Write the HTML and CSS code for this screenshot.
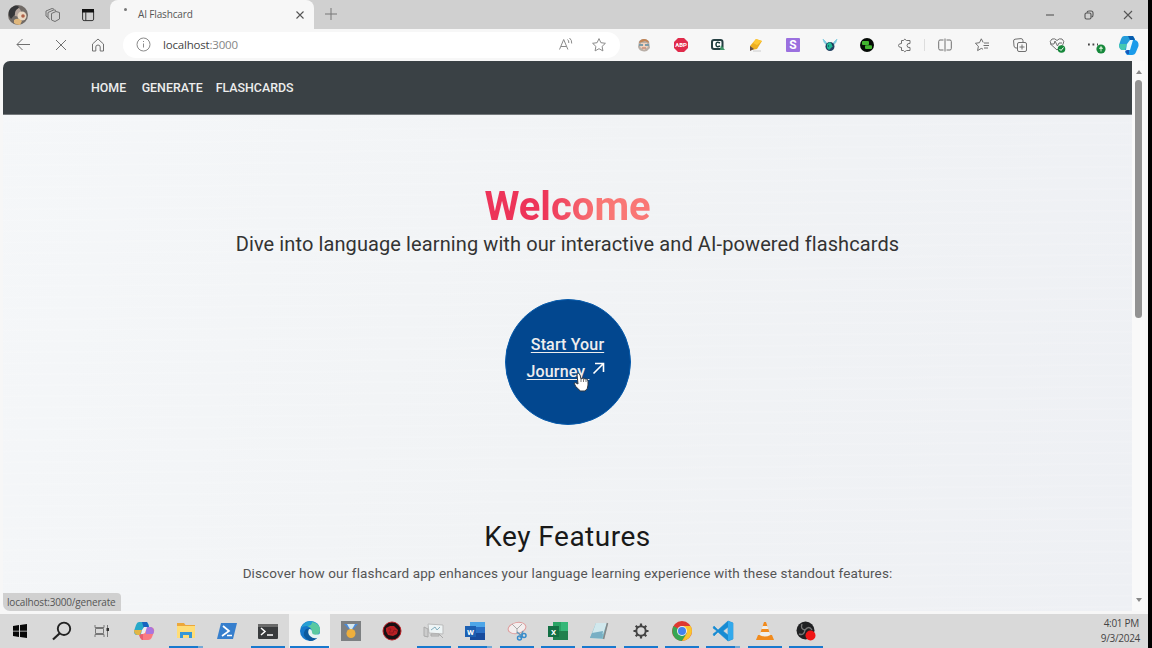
FILE: index.html
```html
<!DOCTYPE html>
<html lang="en">
<head>
<meta charset="utf-8">
<title>AI Flashcard</title>
<link rel="stylesheet" href="styles.css">
</head>
<body>
<div class="screen">
  <div class="titlebar">
    <div class="title-tools">
      <svg class="i22" viewBox="0 0 22 22"><circle cx="11" cy="11" r="10" fill="#706a66"/><path d="M3 5Q9-1 12 3Q9 10 4 15Q0 10 3 5" fill="#353638"/><path d="M8 12Q7 6 12 4Q16 8 13 13Z" fill="#b5a69e"/><circle cx="15" cy="12" r="4.500" fill="#e9d8c3"/><circle cx="16" cy="12" r="1.800" fill="#ae6048"/><path d="M7 16Q11 13 15 17L13 21Q9 21 7 19Z" fill="#e0b77c"/></svg>
      <svg class="i16 line" viewBox="0 0 16 16"><path d="M6.500 6.500 11 4.500l3.500 1v6.500l-4.500 2.500-3.500-1.500zM5 12.500l-2-1.500V5.500L9 2.800l2 .7M3 10.500 1 9V4L7 1.500l2 .7"/></svg>
      <svg class="i14" viewBox="0 0 14 14"><rect x="1.600" y="1.600" width="11" height="11" rx="1.500" fill="none" stroke="#333"/><path d="M1 1h12v3.500H1z" fill="#111"/><path d="M4.800 4v8.500" stroke="#333"/></svg>
    </div>
    <div class="tab">
      <i class="loading-dot"></i>
      <span class="tab-name">AI Flashcard</span>
      <svg class="i10 dark" viewBox="0 0 10 10"><path d="m1.500 1.500 7 7M8.500 1.500l-7 7"/></svg>
    </div>
    <svg class="new-tab" viewBox="0 0 14 14"><path d="M7 1v12M1 7h12"/></svg>
    <div class="window-controls">
      <svg class="i10 dark" viewBox="0 0 10 10"><path d="M1 5h8"/></svg>
      <svg class="i10 dark" viewBox="0 0 10 10"><rect x="1" y="3" width="6" height="6" rx="1.500"/><path d="M3 2.800Q3 1 5 1h2q2 0 2 2v2q0 2-1.500 2"/></svg>
      <svg class="i10 dark" viewBox="0 0 10 10"><path d="m1 1 8 8M9 1 1 9"/></svg>
    </div>
  </div>

  <div class="toolbar">
    <div class="nav-tools">
      <svg class="i16 line" viewBox="0 0 16 16"><path d="M14 7.500H1M6.500 2 1 7.500 6.500 13"/></svg>
      <svg class="i12 line" viewBox="0 0 12 12"><path d="m1 1 10 10M11 1 1 11"/></svg>
      <svg class="i16 line home" viewBox="0 0 16 16"><path d="M2.500 7 8 2l5.500 5v7h-3.300V10q0-2-2.200-2t-2.200 2v4H2.500z"/></svg>
    </div>
    <div class="address">
      <svg class="i16 line pale" viewBox="0 0 16 16"><circle cx="7.500" cy="7.500" r="6.500"/><path d="M7.500 6.500v4M7.500 4v1"/></svg>
      <span class="url">localhost<span class="port">:3000</span></span>
      <svg class="i16 line pale read" viewBox="0 0 16 16"><path d="m1.500 12.500 4.200-10 4.200 10M3 9.500h5.500M9.500 2.500q1.500 1 1.300 3.500M11.500 1q2.500 2 2.200 5.500"/></svg>
      <svg class="i16 line pale star" viewBox="0 0 16 16"><path d="m8 1.600 1.900 4.100 4.500.6-3.300 3.100.8 4.500L8 11.700l-3.900 2.200.8-4.500L1.600 6.300l4.500-.6z"/></svg>
    </div>
    <div class="extensions">
      <span><svg class="i14" viewBox="0 0 14 14"><path d="M2 3Q7-1 12 3l1 7q-3 4-6 3.500Q2 13 1 9z" fill="#b9afa7"/><path d="M2 5Q3 1 7 1t5 4L8 3z" fill="#c18456"/><path d="M4 5h6l1 4-4 3-4-3z" fill="#f1d1bd"/><path d="M2 6h4v2H2zM8 6h4v2H8z" fill="#7c9ba8"/><path d="M5 10h4" stroke="#b56c59"/></svg></span>
      <span><svg class="i14" viewBox="0 0 14 14"><path d="M4 0h6l4 4v6l-4 4H4l-4-4V4z" fill="#e02b4b"/><text class="abp" x="7" y="9.300">ABP</text></svg></span>
      <span><svg class="i14" viewBox="0 0 14 14"><rect x="1" y="2" width="10.500" height="9" rx="2" fill="#fff" stroke="#253f42" stroke-width="2"/><path d="M9 5Q5 3 5 6.500T9 8" fill="none" stroke="#173b3b" stroke-width="1.500"/><path d="m10 7 4 5H9z" fill="#409568"/></svg></span>
      <span><svg class="i14" viewBox="0 0 14 14"><path d="M1 8 7 1l6 2-5 8-6 1z" fill="#edae20"/><path d="m7 1 6 2-5 4-4-2z" fill="#ffc935"/><path d="m1 8 4 3-4 2z" fill="#66514a"/><path d="M4 13h8" stroke="#ccc"/></svg></span>
      <span><svg class="i14" viewBox="0 0 14 14"><rect width="14" height="14" rx="1" fill="#9b70df"/><text class="s-logo" x="7" y="11.300">S</text></svg></span>
      <span><svg class="i14" viewBox="0 0 14 14"><path d="M0 1q1 5 4 6L3 4zM14 1q-1 5-4 6l1-3z" fill="#77cce2" stroke="#8bd0e2"/><circle cx="7" cy="8.500" r="4.500" fill="#224263"/><path d="m4 6 3-2 3 4-4 4-2-2z" fill="#20b997"/><path d="M5 8h1M9 7h1" stroke="#14263e"/></svg></span>
      <span><svg class="i14" viewBox="0 0 14 14"><circle cx="7" cy="7" r="7" fill="#050b06"/><rect x="2" y="3" width="7" height="4" rx="1" fill="#42b52f"/><rect x="5" y="7.200" width="7" height="3.800" rx="1" fill="#42b52f"/></svg></span>
      <span><svg class="i14 line" viewBox="0 0 14 14"><path d="M3.500 2.500h2Q6.500-.3 8.500 2.500H12v3Q9 5 9 7.500T12 9.500v3H8.500Q6.500 15 5.500 12.500h-2v-3Q.5 9.500.5 7.500t3-2z"/></svg></span>
      <i class="divider"></i>
      <span><svg class="i14 line" viewBox="0 0 14 14"><path d="M5.500 2H2Q.7 2 .7 3.500v7Q.7 12 2 12h3.500M8.500 2H12q1.300 0 1.300 1.500v7Q13.300 12 12 12H8.500M7 .5v13"/></svg></span>
      <span><svg class="i14 line" viewBox="0 0 14 14"><path d="M8.200 4.500 6.300.8 4.500 4.700.4 5.300l3 2.900-.8 4.400 3.700-2.200 1.700.8M9 5h5M8.500 7.500H14M9 10h4"/></svg></span>
      <span><svg class="i14 line" viewBox="0 0 14 14"><rect x="4.500" y="4.500" width="9" height="9" rx="1.500"/><path d="M4.500 10H3Q1.500 10 1 8L.6 3Q.5 1.500 2 1.200L8 .6q1.800 0 2 2v2M9 6.500v5M6.500 9h5"/></svg></span>
      <span><svg class="i16 line" viewBox="0 0 16 16"><path d="M8 13 2 7.500Q0 4 3 2q3-1 5 1.500Q10 1 13 2q3 2 1 5.500L8 13M1 7h4l1-3 2.500 5L10 6h3"/><circle cx="12.500" cy="12" r="3.800" fill="#16883b" stroke="none"/><path d="m10.500 12 1.500 1.500 2.500-3" stroke="#fff"/></svg></span>
      <span><svg class="i20" viewBox="0 0 20 20"><path d="M4 9.500h1.800M8.500 9.500h1.800M13 9.500h1" stroke="#444" stroke-width="1.800"/><circle cx="17" cy="14" r="4.600" fill="#16883b"/><path d="M17 16.500v-4M15.500 13.500l1.500-2 1.500 2z" stroke="#cceacc" fill="#cceacc"/></svg></span>
      <span class="copilot"><svg class="i20" viewBox="0 0 20 20"><path d="M5 1h8q2 0 3 4L9 15H4q-4 0-4-5L2 4Q3 1 5 1" fill="#259dda"/><path d="M0 9h8l-2 6H3q-3-1-3-6" fill="#44c8b1"/><path d="m11 5 5 0q4 1 3.500 6L17 17q-1 3-4 3H8L6 17l3-2z" fill="#1a9bea"/><path d="M9 1h5l2 4h-5z" fill="#075bad"/><path d="m6 16 4-2v5H8z" fill="#1858b8"/><path d="m8 9 3-4h3l-3 10H7z" fill="#e9faff"/></svg></span>
    </div>
  </div>

  <div class="viewport">
    <div class="page">
      <nav class="site-nav"><a>HOME</a><a>GENERATE</a><a>FLASHCARDS</a></nav>
      <main>
        <h1>Welcome</h1>
        <p class="lead">Dive into language learning with our interactive and AI-powered flashcards</p>
        <a class="cta">
          <span class="cta-line start">Start Your</span>
          <span class="cta-row"><span class="cta-line journey">Journey&nbsp;</span><svg class="arrow" viewBox="0 0 14 14"><path d="M1.500 13.500 11 4M3 3.500h8.500V12"/></svg></span>
        </a>
        <svg class="cursor" viewBox="0 0 16 20"><path d="M4 2Q6 0 7 3l1 4 2-1 2 1 2 0 1 2v4q0 4-3 6H7q-1-2-4-4l-2-4q1-1 4 1z" fill="#fff" stroke="#303943"/><path d="M8 7v3M10.500 7v3M13 8v2" stroke="#777"/></svg>
        <h2>Key Features</h2>
        <p class="details">Discover how our flashcard app enhances your language learning experience with these standout features:</p>
      </main>
      <div class="status">localhost:3000/generate</div>
    </div>
    <div class="scrollbar"><i class="up"></i><i class="thumb"></i><i class="down"></i></div>
  </div>

  <div class="taskbar">
    <div class="apps">
      <span><svg class="i14" viewBox="0 0 14 14"><path d="m0 2 6-.9v5.600H0zM7 1l7-1v6.700H7zM0 7.500h6v5.400L0 12zM7 7.500h7V14l-7-1z" fill="#080808"/></svg></span>
      <span><svg class="i20" viewBox="0 0 20 20"><circle cx="12" cy="7.800" r="6.200" fill="none" stroke="#222" stroke-width="1.900"/><path d="m7.500 12.500-6.500 6" stroke="#222" stroke-width="2.200"/></svg></span>
      <span><svg class="i16" viewBox="0 0 16 16"><path d="M0 2v2.500h9V2M0 14v-2.500h9V14M.5 5.500h8v5h-8zM12.500 2v12" fill="none" stroke="#777"/><path d="M11.500 5H14v3h-2.500z" fill="#333"/></svg></span>
      <span><svg class="i20" viewBox="0 0 20 20"><path d="M5 1h7q2 0 3 4L9 14H3q-3 0-3-4L2 4Q3 1 5 1" fill="#28a9c9"/><path d="M0 9h8l-2 5H3q-3-1-3-5" fill="#e2b545"/><path d="M8 1h5l2 5-5 2z" fill="#1763bf"/><path d="M12 6h5q4 1 3 5l-2 5q-1 3-4 3H8l-2-5 4-3z" fill="#fa7b82"/><path d="M12 6h5q3 1 3 5l-1 2h-7z" fill="#a876df"/><path d="m5 14 4-1v6H8q-2-1-3-5" fill="#e95f6e"/><path d="m8 9 2-3h3l-2 6-2 1H7z" fill="#eee"/></svg></span>
      <span class="open stacked"><svg class="i20" viewBox="0 0 20 20"><path d="M1 2h7l1.500 2H19v13H1z" fill="#eca73b"/><path d="M1 5h18v12H1z" fill="#ffdd77"/><path d="M4 17v-6h12v6h-3v-3H7v3z" fill="#3697d7"/></svg></span>
      <span><svg class="i20" viewBox="0 0 20 20"><path d="M4 2h16l-4 16H0z" fill="#377fcd"/><path d="m6 5 6 5-7 5" stroke="#fff" stroke-width="1.700" fill="none"/><path d="M10 14.500h5" stroke="#fff" stroke-width="1.500"/></svg></span>
      <span class="open"><svg class="i20" viewBox="0 0 20 20"><rect y="3" width="20" height="15" rx="1" fill="#393b3d"/><path d="M0 3h20v3H0z" fill="#6a6a6a"/><path d="m3 7 4 3.500L3 14M9 14h6" fill="none" stroke="#fff" stroke-width="1.500"/></svg></span>
      <span class="open active"><svg class="i20" viewBox="0 0 20 20"><circle cx="10" cy="10" r="10" fill="#1677c9"/><path d="M1 7Q4 0 11 0q9 1 9 9 0 5-6 5-3-1-2-4 0-5-5-5Q3 5 1 7" fill="#279fd3"/><path d="M12 1q9 2 8 9-1 5-7 4-2-2-1-4-1-4-5-5 5 0 5-4" fill="#5ac9a0"/><path d="M6 8q-6 7 4 12 6 0 9-6-5 3-9-1-2-2 0-6z" fill="#0d5a9e"/><path d="M9 8q3 0 3 3 0 4 8 2v3q-6 3-10-1-3-3-1-7" fill="#e4f4f3"/></svg></span>
      <span><svg class="i20" viewBox="0 0 20 20"><path d="M0 0h20v20H0z" fill="#7d8082"/><path d="m3 3 5 0 2 7zM17 3h-5l-2 7z" fill="#498bdc"/><path d="m6 3 4 7 4-7z" fill="#d5e8ef"/><circle cx="10" cy="12.500" r="4.500" fill="#efaf3c"/></svg></span>
      <span><svg class="i20" viewBox="0 0 20 20"><circle cx="10" cy="10" r="9" fill="#191113" stroke="#bb2026"/><path d="m4 7 4-2 4 0 4 4-1 4-4 2-5-1-2-4z" fill="#ba2024"/><path d="m6 8 3 0-2 4 4 0 1-3 3 1" stroke="#8f171d" fill="none"/></svg></span>
      <span class="open"><svg class="i20" viewBox="0 0 20 20"><path d="m4 3 15 1v9L5 12z" fill="#eef4f5" stroke="#bbb"/><path d="m7 9 4-3 2 3 3-3" stroke="#84afbf" fill="none"/><path d="m0 6 4 2v8l-4-1zM7 13h8v2H7zM15 13l4 4" fill="#ccc" stroke="#aaa"/></svg></span>
      <span class="open stacked"><svg class="i20" viewBox="0 0 20 20"><path d="M5 1h15v18H5z" fill="#2a70c6"/><path d="M5 1h15v5H5z" fill="#4ea6e8"/><path d="M5 12h15v7H5z" fill="#174b9d"/><path d="M0 5h11v11H0z" fill="#1d60b2"/><text class="office" x="5.500" y="13.500">W</text></svg></span>
      <span class="open"><svg class="i20" viewBox="0 0 20 20"><ellipse cx="10" cy="7" rx="9" ry="5.500" transform="rotate(-12 10 7)" fill="#f3eeee" stroke="#df9b9b"/><path d="m5 3 5 5 5-5M10 8v5" stroke="#aaa" fill="none"/><path d="m10 11 6 5m0-6-3 7" stroke="#6496b8" stroke-width="1.500"/><circle cx="12.500" cy="17" r="2" fill="none" stroke="#378ccc" stroke-width="1.500"/><circle cx="17" cy="14.500" r="2" fill="none" stroke="#378ccc" stroke-width="1.500"/></svg></span>
      <span class="open"><svg class="i20" viewBox="0 0 20 20"><path d="M5 1h15v18H5z" fill="#21804d"/><path d="M5 1h8v9H5z" fill="#29a465"/><path d="M13 1h7v9h-7z" fill="#36b778"/><path d="M0 5h11v11H0z" fill="#137044"/><text class="office" x="5.500" y="13.500">X</text></svg></span>
      <span class="open"><svg class="i20" viewBox="0 0 20 20"><path d="M7 2h12l-4 16-14-1z" fill="#7fbfcd"/><path d="M7 2h11l-4 11H3z" fill="#d1e8ed"/><path d="m3 12 11-2-1 7H1z" fill="#78afc4"/><path d="m18.500 2-4 16" stroke="#888" stroke-width="1.500"/></svg></span>
      <span class="open"><svg class="i16" viewBox="0 0 16 16"><path d="M8 .5v3M8 12.500v3M.5 8h3M12.500 8h3M2.700 2.700l2 2M11.300 11.300l2 2M13.300 2.700l-2 2M4.700 11.300l-2 2" stroke="#444" stroke-width="2.200"/><circle cx="8" cy="8" r="4.700" fill="none" stroke="#444" stroke-width="2"/></svg></span>
      <span class="open"><svg class="i20" viewBox="0 0 20 20"><circle cx="10" cy="10" r="10" fill="#de3932"/><path d="M10 10 1.500 5Q-2 12 4 18q3 2 6 2l5-8z" fill="#37a652"/><path d="M10 5h8.700Q22 11 17 17q-3 3-7 3l5-8z" fill="#fac52d"/><circle cx="10" cy="10" r="5" fill="#eee"/><circle cx="10" cy="10" r="4" fill="#4383ed"/></svg></span>
      <span class="open stacked"><svg class="i20" viewBox="0 0 20 20"><path d="m15 0 5 2v16l-5 2L5 11l-4 4-1-2 4-3-4-3 1-2 4 4zm0 6-5 4 5 4z" fill="#168bd3" stroke="#168bd3" stroke-width=".6"/><path d="m15 0 5 2v16l-5 2z" fill="#32a9ec"/></svg></span>
      <span class="open"><svg class="i20" viewBox="0 0 20 20"><path d="M3 14h14l2 5H1z" fill="#f18b1e"/><path d="M9 1h2l5 15q-6 3-12 0z" fill="#f18b1e"/><path d="m7.500 5-1 3h7l-1-3zM5.500 11l-1 3q5 3 11 0l-1-3z" fill="#f0efeb"/></svg></span>
      <span class="open"><svg class="i20" viewBox="0 0 20 20"><circle cx="9.500" cy="9.500" r="9" fill="#202123"/><path d="M9 9Q4 8 6 3M9 9q4-5 7 0M9 9q-1 6-6 4" fill="none" stroke="#777" stroke-width="1.400"/><circle cx="14.500" cy="14.500" r="5" fill="#f01616"/></svg></span>
    </div>
    <div class="clock"><span class="time">4:01 PM</span><span class="date">9/3/2024</span></div>
  </div>
</div>
</body>
</html>
```
FILE: styles.css
```css
* { box-sizing: border-box; }
body { margin: 0; background: #000; font-family: "Open Sans", "Noto Sans", sans-serif; }
svg { display: block; flex: none; overflow: visible; }
h1, h2, p { margin: 0; white-space: nowrap; }

.screen { width: 1148px; height: 648px; display: flex; flex-direction: column; background: #f7f7f7; overflow: hidden; }
.i10 { width: 10px; height: 10px; }
.i12 { width: 12px; height: 12px; }
.i14 { width: 14px; height: 14px; }
.i16 { width: 16px; height: 16px; }
.i20 { width: 20px; height: 20px; }
.i22 { width: 22px; height: 22px; }
.line { fill: none; stroke: #707070; stroke-width: 1; }
.pale { stroke: #8b8b8b; }
.dark { fill: none; stroke: #555; stroke-width: 1.1; }

.titlebar { flex: 0 0 29px; display: flex; background: #d0d0d0; }
.title-tools { width: 110px; display: flex; align-items: center; gap: 16px; padding-left: 7px; }
.title-tools .i14 { margin-left: 4px; }
.tab { width: 204px; display: flex; align-items: center; background: #f7f7f7; border-radius: 8px 8px 0 0; padding: 0 9px 0 14px; }
.loading-dot { width: 3px; height: 3px; border-radius: 50%; background: #777; margin-bottom: 10px; }
.tab-name { flex: 1; margin: -1px 0 0 11px; font-size: 10px; letter-spacing: -.15px; color: #555; }
.new-tab { width: 14px; height: 14px; margin: 7px 0 0 10px; stroke: #777; fill: none; }
.window-controls { margin-left: auto; display: flex; align-items: center; gap: 29px; padding-right: 15px; }

.toolbar { flex: 0 0 32px; display: flex; align-items: center; background: #f7f7f7; }
.nav-tools { width: 123px; display: flex; align-items: center; gap: 23px; padding-left: 16px; }
.address { width: 497px; height: 26px; display: flex; align-items: center; border-radius: 13px; background: #fff; padding: 0 13px; }
.url { margin: -1px 0 0 11px; flex: 1; font-size: 11.5px; letter-spacing: -.19px; color: #444; }
.port { color: #858585; }
.star { margin-left: 17px; }
.extensions { display: flex; align-items: center; padding-left: 5px; }
.extensions > span { width: 37.3px; display: flex; justify-content: center; }
.extensions .divider { width: 1px; height: 12px; background: #ddd; margin: 0 1px; }
.extensions > .copilot { width: 32px; }
.abp { font: bold 6px Roboto, sans-serif; fill: #fff; text-anchor: middle; }
.s-logo { font: bold 12px Roboto, sans-serif; fill: #fff; text-anchor: middle; }

.viewport { height: 550px; margin-left: 3px; display: flex; }
.page { position: relative; width: 1129px; background: repeating-linear-gradient(179.5deg, transparent 0 4px, rgba(255,255,255,.1) 5px 6px, transparent 7px 11px), linear-gradient(110deg, #f5f7f9, #f1f3f5 50%, #eef0f4); border-radius: 7px 0 0 7px; overflow: hidden; font-family: Roboto, sans-serif; }
.site-nav { height: 54px; display: flex; align-items: center; padding-left: 88px; background: #3a4145; border-bottom: 1px solid #74797c; color: #ededed; font-size: 12.4px; font-weight: 500; }
.site-nav a { margin-right: 15.5px; }
.site-nav a:nth-child(2) { margin-right: 13px; }
main { display: flex; flex-direction: column; align-items: center; padding-top: 66px; }
h1 { font-size: 40px; line-height: 51px; font-weight: 700; background: linear-gradient(90deg, #ed3459 0 35%, #f97775 70%); background-clip: text; color: transparent; }
.lead { font-size: 20px; letter-spacing: .1px; line-height: 25px; color: #333; }
.cta { width: 126px; height: 126px; margin-top: 42px; border-radius: 50%; background: #02478f; border: 1px solid #075bac; color: #eee; display: flex; flex-direction: column; align-items: center; padding-top: 31px; font-size: 16px; letter-spacing: .15px; line-height: 27px; font-weight: 500; }
.cta-line { text-decoration: underline; text-underline-offset: 2px; }
.cta-row { display: flex; margin-left: -2px; }
.arrow { width: 14px; height: 14px; margin: 2px 0 0 3px; fill: none; stroke: #fff; stroke-width: 1.6; }
.cursor { position: absolute; left: 570px; top: 311px; width: 16px; height: 20px; }
h2 { margin-top: 94px; font-size: 28px; letter-spacing: .5px; line-height: 36px; font-weight: 400; color: #191919; }
.details { margin-top: 8px; font-size: 13.5px; letter-spacing: .13px; line-height: 20px; color: #555; }
.status { position: absolute; left: 0; bottom: 0; width: 118px; height: 18px; background: #d0d0d0; border-radius: 0 4px 0 4px; font: 10px/18px "Open Sans", sans-serif; letter-spacing: -.18px; color: #555; padding-left: 4px; white-space: nowrap; }

.scrollbar { width: 13px; display: flex; flex-direction: column; align-items: center; background: #f9f9f9; padding: 9px 0; }
.up { border: 3px solid transparent; border-top: 0; border-bottom: 4px solid #888; }
.thumb { width: 7px; height: 238px; margin-top: 6px; border-radius: 4px; background: #929292; }
.down { margin-top: auto; border: 3px solid transparent; border-bottom: 0; border-top: 4px solid #888; }

.taskbar { height: 34px; margin-top: 3px; display: flex; justify-content: space-between; background: #d9d9d9; }
.apps { display: flex; margin-left: -.3px; }
.apps > span { width: 41.35px; display: flex; align-items: center; justify-content: center; }
.apps .open { background: linear-gradient(#1979ce, #1979ce) center bottom / 34px 2px no-repeat; }
.apps .stacked { background: linear-gradient(90deg, #1979ce 86%, #73a9d6 86%) center bottom / 34px 2px no-repeat; }
.apps .active { background: linear-gradient(#1979ce, #1979ce) center bottom / 39px 2px no-repeat, #f1f1f1; }
.office { font: bold 8px Roboto, sans-serif; fill: #fff; text-anchor: middle; }
.clock { display: flex; flex-direction: column; align-items: flex-end; padding: 2px 8px 0 0; font-size: 10px; letter-spacing: -.3px; line-height: 15px; color: #444; }
.time { padding-right: 1px; }
```
